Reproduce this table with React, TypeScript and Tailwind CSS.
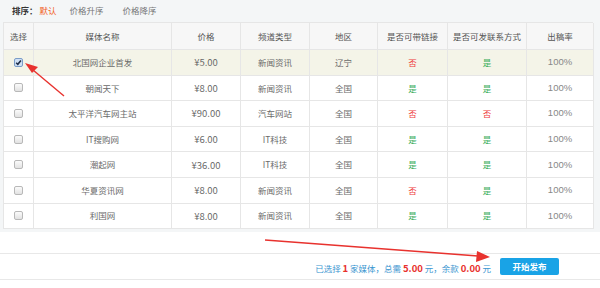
import React from "react";

type Row = { name: string; price: string; type: string; area: string; link: boolean; contact: boolean; checked?: boolean };

const rows: Row[] = [
  { name: "北国网企业首发", price: "¥5.00", type: "新闻资讯", area: "辽宁", link: false, contact: true, checked: true },
  { name: "朝闻天下", price: "¥8.00", type: "新闻资讯", area: "全国", link: true, contact: true },
  { name: "太平洋汽车网主站", price: "¥90.00", type: "汽车网站", area: "全国", link: false, contact: false },
  { name: "IT搜购网", price: "¥6.00", type: "IT科技", area: "全国", link: true, contact: true },
  { name: "潮起网", price: "¥36.00", type: "IT科技", area: "全国", link: true, contact: true },
  { name: "华夏资讯网", price: "¥8.00", type: "新闻资讯", area: "全国", link: false, contact: true },
  { name: "利国网", price: "¥8.00", type: "新闻资讯", area: "全国", link: true, contact: true },
];

const cols = "grid grid-cols-[30px_138px_69px_69px_68px_70px_79px_67px]";
const cell = "flex items-center justify-center border-r border-b border-[#e6e6e6] whitespace-nowrap";

function YesNo({ v }: { v: boolean }) {
  return v ? <span className="text-[#3cae5c]">是</span> : <span className="text-[#ee3b3b]">否</span>;
}

function Checkbox({ checked }: { checked?: boolean }) {
  if (checked) {
    return (
      <div className="w-[9px] h-[9px] rounded-[2px] border border-[#7a9cc8] bg-[#cfe0f5] flex items-center justify-center">
        <svg width="7" height="7" viewBox="0 0 9 9">
          <path d="M1.5 4.8 L3.6 6.8 L7.6 1.8" stroke="#1f2f4a" strokeWidth="2" fill="none" />
        </svg>
      </div>
    );
  }
  return <div className="w-[9px] h-[9px] rounded-[2px] border border-[#b8b8b8] bg-gradient-to-b from-[#fbfbfb] to-[#e2e2e2]" />;
}

export default function App() {
  return (
    <div
      className="relative w-[600px] h-[288px] bg-white overflow-hidden text-[8.5px] text-[#6a6a6a]"
      style={{ fontFamily: '"Noto Sans CJK SC", "Noto Sans", sans-serif' }}
    >
      <div className="bg-[#f4f6f7] pl-[3px] pb-[3px]">
        <div className="h-[22px] flex items-center pl-[9px] text-[8.5px] pb-[1px]">
          <span className="font-bold text-[#333]">排序：</span>
          <span className="text-[#f2621f] ml-[2px]">默认</span>
          <span className="text-[#777] ml-[13px]">价格升序</span>
          <span className="text-[#777] ml-[19px]">价格降序</span>
        </div>
        <div className="w-[590px] border-l border-t border-[#e6e6e6] bg-white">
          <div className={`${cols} h-[27px] bg-[#f7f7f7] text-[#555]`}>
            {["选择", "媒体名称", "价格", "频道类型", "地区", "是否可带链接", "是否可发联系方式", "出稿率"].map((h) => (
              <div key={h} className={cell}>{h}</div>
            ))}
          </div>
          {rows.map((r, i) => (
            <div key={i} className={`${cols} h-[25.6px] ${r.checked ? "bg-[#f4f4e8]" : "bg-white"}`}>
              <div className={cell}><Checkbox checked={r.checked} /></div>
              <div className={cell}>{r.name}</div>
              <div className={`${cell} text-[9.5px]`}>{r.price}</div>
              <div className={cell}>{r.type}</div>
              <div className={cell}>{r.area}</div>
              <div className={cell}><YesNo v={r.link} /></div>
              <div className={cell}><YesNo v={r.contact} /></div>
              <div className={`${cell} text-[#888] text-[9.5px]`} style={{ fontFamily: '"Liberation Sans", sans-serif' }}>100%</div>
            </div>
          ))}
        </div>
      </div>
      <div className="h-[21px] bg-white" />
      <div className="h-[27px] border-t border-b border-[#e8e8e8] flex items-center justify-end pr-[41px]">
        <div className="text-[8.5px] text-[#3a95d0] mr-[9px] mt-[3px]">
          已选择 <b className="text-[#e8312d] text-[9.5px]">1</b> 家媒体，总需 <b className="text-[#e8312d] text-[9.5px]">5.00</b> 元，余款 <b className="text-[#e8312d] text-[9.5px]">0.00</b> 元
        </div>
        <div className="w-[59px] h-[17px] rounded-[2px] bg-[#19a3e6] text-white font-bold text-[8.5px] flex items-center justify-center">
          开始发布
        </div>
      </div>
      <svg className="absolute left-0 top-0 pointer-events-none" width="600" height="288">
        <line x1="64" y1="96" x2="33" y2="70" stroke="#e8322e" strokeWidth="1.4" />
        <polygon points="25,63 38,67 32,73" fill="#e8322e" />
        <line x1="265" y1="240" x2="478" y2="256" stroke="#e8322e" strokeWidth="1.5" />
        <polygon points="490,257 477,251 476,262" fill="#e8322e" />
      </svg>
    </div>
  );
}
